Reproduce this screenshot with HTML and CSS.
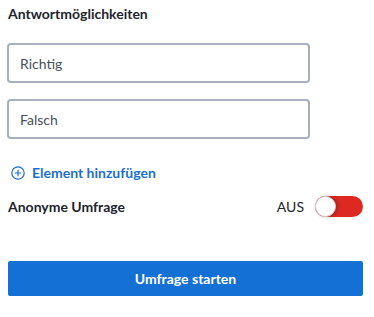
FILE: index.html
```html
<!DOCTYPE html>
<html lang="de">
<head>
  <meta charset="UTF-8" />
  <title>Umfrage</title>
  <link rel="stylesheet" href="styles.css">
</head>
<body>

  <div class="poll">

    <!-- Answer options -->
    <h3 class="poll-title">Antwortmöglichkeiten</h3>
    <div class="options">
      <input class="option" type="text" value="Richtig" />
      <input class="option" type="text" value="Falsch" />
    </div>

    <a class="add-item" href="#">
      <svg width="14" height="14" viewBox="0 0 14 14" aria-hidden="true">
        <circle cx="7" cy="7" r="6.2" fill="none" stroke="#1a6fd1" stroke-width="1.2"/>
        <path d="M7 3.8v6.4M3.8 7h6.4" stroke="#1a6fd1" stroke-width="1.2"/>
      </svg>
      <span>Element hinzufügen</span>
    </a>

    <!-- Anonymous switch -->
    <div class="setting">
      <span class="setting-label">Anonyme Umfrage</span>
      <div class="switch-wrap">
        <span class="switch-state">AUS</span>
        <span class="switch" role="switch" aria-checked="false"><span class="knob"></span></span>
      </div>
    </div>

    <button class="start-btn">Umfrage starten</button>

  </div>

</body>
</html>
```

FILE: styles.css
```css
* {
  box-sizing: border-box;
  margin: 0;
  padding: 0;
  font-family: 'Lato', 'Noto Sans', sans-serif;
}

body {
  background: #fff;
  color: #1d242b;
}

.poll {
  width: 374px;
  padding: 4px 11px 0 8px;
}

.poll-title {
  font-size: 14px;
  font-weight: 700;
  line-height: 20px;
}

.options {
  display: flex;
  flex-direction: column;
  gap: 16px;
  margin-top: 19px;
  width: 303px;
  margin-left: -1px;
}

.option {
  height: 40px;
  border: 2px solid #a7b1bb;
  border-radius: 4px;
  padding: 0 11px;
  font-size: 14px;
  color: #46505a;
  outline: none;
}

.add-item {
  display: flex;
  align-items: center;
  gap: 7px;
  margin-top: 26px;
  padding-left: 3px;
  color: #1a6fd1;
  font-size: 14px;
  font-weight: 700;
  text-decoration: none;
  line-height: 16px;
}

.setting {
  display: flex;
  justify-content: space-between;
  align-items: center;
  margin-top: 13px;
  height: 24px;
}

.setting-label {
  font-size: 14px;
  font-weight: 700;
}

.switch-wrap {
  display: flex;
  align-items: center;
  gap: 11px;
}

.switch-state {
  font-size: 14px;
  color: #1d242b;
}

.switch {
  position: relative;
  width: 48px;
  height: 21px;
  border-radius: 11px;
  background: #dc2a23;
}

.switch .knob {
  position: absolute;
  left: 0;
  top: 0;
  width: 21px;
  height: 21px;
  border-radius: 50%;
  background: #fff;
  border: 1px solid #d2d2d2;
  box-shadow: 2px 0 4px rgba(0, 0, 0, 0.25);
}

.start-btn {
  display: block;
  width: 355px;
  height: 35px;
  margin-top: 43px;
  border: none;
  border-radius: 2px;
  background: #1570d6;
  color: #fff;
  font-size: 14px;
  font-weight: 700;
}
```
